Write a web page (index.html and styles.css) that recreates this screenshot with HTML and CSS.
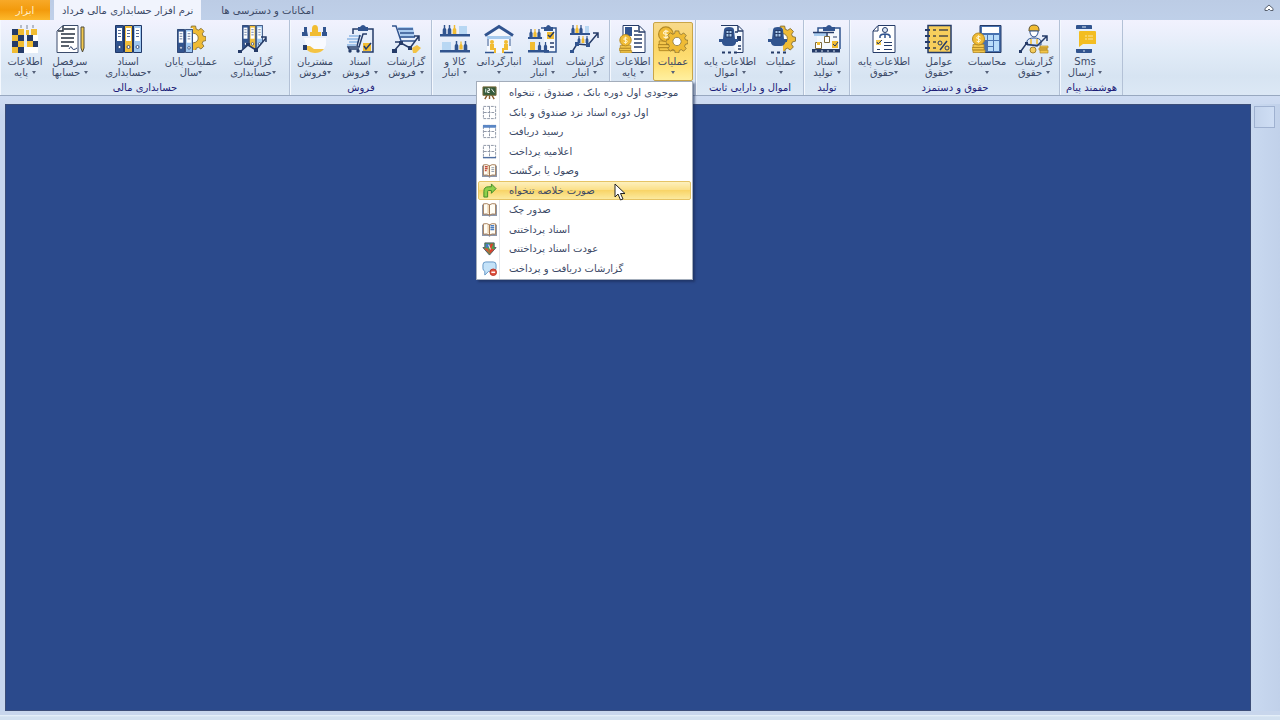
FILE: index.html
```html
<!DOCTYPE html>
<html lang="fa">
<head>
    <meta charset="UTF-8">
    <meta name="viewport" content="width=device-width, initial-scale=1.0">
    <title>نرم افزار حسابداری مالی فرداد</title>
    <link rel="stylesheet" href="styles.css">
</head>
<body>
    <!-- shared icon parts -->
    <svg class="defs" width="0" height="0" aria-hidden="true">
        <symbol id="gear" viewBox="0 0 24 24">
            <path d="M10 1h4l.6 3 2.200.9 2.500-1.700 2.800 2.800-1.700 2.500.9 2.200 2.700.6v3.600l-2.800.7-.9 2.200 1.700 2.500-2.800 2.800-2.500-1.700-2.100.9-.6 2.700h-4l-.6-2.800-2.200-.9-2.400 1.700L2 20.300l1.700-2.500-.9-2.200L0 15v-4l2.800-.6.9-2.200L2 5.800 4.800 3l2.500 1.700 2.100-.9z" fill="#efbb35" stroke="#7d6a34" stroke-width=".8"/>
            <circle cx="12" cy="12.500" r="4.500" fill="#fff" stroke="#7d6a34" stroke-width=".8"/>
        </symbol>
        <symbol id="coins" viewBox="0 0 14 20">
            <path d="M1 12h11v3H1zM0 15h12v2.500H0zM1 17.500h12V20H1z" fill="#f3c64b" stroke="#b48a25" stroke-width=".8"/>
            <circle cx="6.500" cy="6.500" r="6" fill="#f0bb35" stroke="#b48a25"/>
            <path d="M8.500 4.500Q6.500 3 5 4.500t1.500 2T8 8.700 4.500 8.500M6.500 2.800v7.400" fill="none" stroke="#fff3cc"/>
        </symbol>
        <symbol id="binder" viewBox="0 0 9 28" preserveAspectRatio="none">
            <path d="M.5.5h8v27h-8z" stroke="#1f3768"/>
            <path d="M2 3h5v13H2z" fill="#fff"/>
            <path d="M3 5.500h3M3 8.500h3M3 11.500h3" stroke="#5b6f96"/>
            <circle cx="4.500" cy="22" r="1.500" fill="#fff" stroke="#1f3768" stroke-width=".8"/>
        </symbol>
        <symbol id="bottle" viewBox="0 0 5 10">
            <path d="M1.700 0h1.600v3L4.500 5v5h-4V5l1.200-2z"/>
        </symbol>
        <symbol id="lamp" viewBox="0 0 22 30">
            <path d="M6 15 7 6q0-3 5-3t5 3l1 9h3v3h-2v1q-1 3-4 3H9q-3 0-4-3v-1H2v-3z" fill="#31548f"/>
            <path d="M9 6.500h6V13H9zM12 6.500V13M9 9.500h6" fill="#a9caec" stroke="#253b68"/>
            <path d="M5 28.500h3M11 28.500h3M17 28.500h3" stroke="#253b68" stroke-width="2"/>
        </symbol>
        <symbol id="grid" viewBox="0 0 16 16">
            <path d="M1.500 1.500h13v13h-13zM8 2v12M2 8h12" fill="#fff" stroke="#8b93a3" stroke-dasharray="3 1"/>
        </symbol>
        <symbol id="book" viewBox="0 0 16 16">
            <path d="M0 3h16v12H9l-1 1-1-1H0z" fill="#8b97ad"/>
            <path d="M1.500 2q4-1 6.500 1v11q-2.500-2-6.500-1zM14.500 2Q10.500 1 8 3v11q2.500-2 6.500-1z" fill="#fffdf5" stroke="#a27a55"/>
            <path d="M6.500 3v9" stroke="#e3bb84"/>
        </symbol>
    </svg>

    <nav class="tabs">
        <button class="tab tab-file">ابزار</button>
        <button class="tab tab-active">نرم افزار حسابداری مالی فرداد</button>
        <button class="tab">امکانات و دسترسی ها</button>
        <button class="collapse" aria-label="بستن">
            <svg viewBox="0 0 10 8" width="10" height="8"><path d="M1 4.500 5 1l4 3.500v2H6.500L5 5 3.500 6.500H1z" fill="#fff" stroke="#59616f"/></svg>
        </button>
    </nav>

    <header class="ribbon">
        <section class="group">
            <div class="tools">
                <button class="tool w-44">
                    <svg class="icon" viewBox="0 0 30 30">
                        <path d="M11 1v3M17 1v4M23 1v3" stroke="#7b8494"/>
                        <path d="M2 5h6v6H2zM8 17h6v-6H8zM2 17h6v6H2zM8 23h6v6H8zM17 11h6v6h-6zM23 17h5v6h-5z" fill="#253b68"/>
                        <path d="M8 5h6v6H8zM21 5h6v6h-6zM2 11h6v6H2zM16 6h3v5h-3zM8 17h6v6H8zM17 17h6v6h-6zM2 23h6v6H2z" fill="#f1bc32"/>
                        <path d="M14 23h14v6H14zM23 11h5v6h-5z" fill="#fff"/>
                    </svg>
                    <span>اطلاعات</span><span class="drop">پایه</span>
                </button>
                <button class="tool w-46">
                    <svg class="icon" viewBox="0 0 30 30">
                        <path d="M8 1.500h15v27H2V7z" fill="#fff" stroke="#3b4b6b"/>
                        <path d="M8 2v5H3M9 5h11M6 10h14M6 14h13M6 18h13M6 22h8" fill="none" stroke="#26303f" stroke-width="1.500"/>
                        <path d="M26 3h3v21l-1.500 4-1.500-4z" fill="#f3c94f" stroke="#4d4a3c"/>
                        <path d="M14 25q2-4 3-1t5 0" fill="none" stroke="#253b68"/>
                    </svg>
                    <span>سرفصل</span><span class="drop">حسابها</span>
                </button>
                <button class="tool w-70">
                    <svg class="icon" viewBox="0 0 30 30">
                        <use href="#binder" x="2" y="1" width="9" height="28" fill="#31548f"/>
                        <use href="#binder" x="11" y="1" width="9" height="28" fill="#f0bd3a"/>
                        <use href="#binder" x="20" y="1" width="9" height="28" fill="#9fc7f0"/>
                    </svg>
                    <span>اسناد</span><span class="drop tight">حسابداری</span>
                </button>
                <button class="tool w-56">
                    <svg class="icon" viewBox="0 0 30 30">
                        <use href="#gear" x="5" y="1" width="25" height="25"/>
                        <path d="M0 4h17v25H0z" fill="#e8effa"/>
                        <use href="#binder" x="1" y="5" width="8" height="24" fill="#31548f"/>
                        <use href="#binder" x="9" y="5" width="8" height="24" fill="#9fc7f0"/>
                    </svg>
                    <span>عملیات پایان</span><span class="drop tight">سال</span>
                </button>
                <button class="tool w-68">
                    <svg class="icon" viewBox="0 0 30 30">
                        <use href="#binder" x="4" y="1" width="7" height="24" fill="#31548f"/>
                        <use href="#binder" x="11" y="1" width="7" height="24" fill="#f0bd3a"/>
                        <use href="#binder" x="18" y="1" width="7" height="24" fill="#9fc7f0"/>
                        <path d="m2 28 8-7 8 5 10-12v15H2z" fill="#e4edf9"/>
                        <path d="m2 28 8-7 8 5 10-12M23 13h5v5" fill="none" stroke="#253b68" stroke-width="1.500"/>
                        <path d="M0 26h4v3H0zM8 19h4v3H8zM16 24h4v4h-4z" fill="#253b68"/>
                    </svg>
                    <span>گزارشات</span><span class="drop tight">حسابداری</span>
                </button>
            </div>
            <h2 class="caption">حسابداری مالی</h2>
        </section>

        <section class="group">
            <div class="tools">
                <button class="tool w-44">
                    <svg class="icon" viewBox="0 0 30 30">
                        <path d="M4 14h22v7q-3 8-11 8-7 0-8-5z" fill="#f8faff"/>
                        <path d="M4 3h3v4l1 5H2V8h2zM23 3h3v5h1v4h-5V8h1z" fill="#31548f"/>
                        <path d="M12 5q0-4 3-4t3 4v3h3v4H10V8h2z" fill="#f1bc32"/>
                        <path d="M5 22h5l4 3h10q-3 4-9 4-5 0-8-3H5z" fill="#f3c345"/>
                        <path d="M3 21h4v5H3z" fill="#253b68"/>
                    </svg>
                    <span>مشتریان</span><span class="drop tight">فروش</span>
                </button>
                <button class="tool w-46">
                    <svg class="icon" viewBox="0 0 30 30">
                        <path d="M8 10V5h20v23H17" fill="#e6eefa" stroke="#253b68" stroke-width="1.500"/>
                        <path d="M13 3h2q3-4 6 0h2v4H13z" fill="#31548f"/>
                        <path d="M4 12h12M2 15h12M4 18h9M2 21h9" stroke="#8db7e5" stroke-width="1.500"/>
                        <path d="M22 10h-4l-4 13H3l1 2h10M15 11l-3 11" fill="none" stroke="#253b68" stroke-width="1.500"/>
                        <circle cx="5" cy="27" r="1.700" fill="#253b68"/><circle cx="13" cy="27" r="1.700" fill="#253b68"/>
                        <path d="M18 19h8v8h-8z" fill="#f1bc32"/>
                        <path d="m19 22 2 3 5-6" fill="none" stroke="#253b68" stroke-width="1.500"/>
                    </svg>
                    <span>اسناد</span><span class="drop">فروش</span>
                </button>
                <button class="tool w-46">
                    <svg class="icon" viewBox="0 0 30 30">
                        <path d="M7 3h15l2 11H10z" fill="#a9cbf0"/>
                        <path d="M1 2h4l5 15h14M7 5h15M9 9h14M9 13h15" fill="none" stroke="#31548f" stroke-width="1.500"/>
                        <path d="m3 27 7-8 9 5L28 12M23 12h5v5M4 18h6" fill="none" stroke="#253b68" stroke-width="1.500"/>
                        <path d="M1 25h5v4H1zM8 17h4v4H8zM17 22h4v4h-4z" fill="#253b68"/>
                        <path d="m21 24 5-3 4 3-5 5h-3z" fill="#f3c345"/>
                    </svg>
                    <span>گزارشات</span><span class="drop">فروش</span>
                </button>
            </div>
            <h2 class="caption">فروش</h2>
        </section>

        <section class="group">
            <div class="tools">
                <button class="tool w-40">
                    <svg class="icon" viewBox="0 0 30 30">
                        <g fill="#31548f">
                            <use href="#bottle" x="2" y="1" width="5" height="9"/><use href="#bottle" x="7" y="1" width="5" height="9"/>
                            <use href="#bottle" x="14" y="17" width="5" height="9"/><use href="#bottle" x="23" y="17" width="5" height="9"/>
                        </g>
                        <g fill="#f1bc32"><use href="#bottle" x="12" y="1" width="5" height="9"/><use href="#bottle" x="19" y="17" width="4" height="9"/></g>
                        <path d="M19 2h8v8h-8zM2 18h9v8H2z" fill="#b8d7f3"/>
                        <path d="M0 10h30v2.500H0zM0 26h30v2.500H0z" fill="#31548f"/>
                    </svg>
                    <span>کالا و</span><span class="drop">انبار</span>
                </button>
                <button class="tool w-48">
                    <svg class="icon" viewBox="0 0 30 30">
                        <path d="M3 12 15 4l12 8v17H3z" fill="#f5f8fd"/>
                        <path d="M1 11.500 15 2.500l14 9" fill="none" stroke="#31548f" stroke-width="3"/>
                        <path d="M3 12h24v3H3z" fill="#a7cbee"/>
                        <path d="M4 15v7M26 15v7" stroke="#31548f"/>
                        <circle cx="8" cy="18" r="2" fill="#f1bc32"/><circle cx="22" cy="18" r="2" fill="#f1bc32"/>
                        <path d="M6 20h4v4h2v5h-2v-3H6zM24 20h-4v4h-2v5h2v-3h4z" fill="#f1bc32"/>
                        <path d="M1 28.500h9M20 28.500h9" stroke="#31548f" stroke-width="1.500"/>
                    </svg>
                    <span>انبارگردانی</span><span class="drop alone"></span>
                </button>
                <button class="tool w-40">
                    <svg class="icon" viewBox="0 0 30 30">
                        <path d="M13 4h15v24H15" fill="#f3f7fd" stroke="#31548f" stroke-width="1.500"/>
                        <path d="M16 3h2q2-4 5 0h2v4h-9z" fill="#31548f"/>
                        <path d="M0 13h16v16H0z" fill="#e3ecf9"/>
                        <g fill="#31548f"><use href="#bottle" x="1" y="5" width="4" height="8"/><use href="#bottle" x="9" y="5" width="4" height="8"/><use href="#bottle" x="9" y="18" width="5" height="8"/><use href="#bottle" x="15" y="18" width="5" height="8"/></g>
                        <use href="#bottle" x="5" y="5" width="4" height="8" fill="#f1bc32"/>
                        <path d="M2 18h5v8H2z" fill="#f1bc32"/>
                        <path d="M0 13h14v2H0zM0 26h21v2.500H0z" fill="#31548f"/>
                        <path d="M19 8h7v7h-7z" fill="#f1bc32"/>
                        <path d="m20 11 2 2 4-5M22 19h4M22 23h4" fill="none" stroke="#253b68" stroke-width="1.500"/>
                    </svg>
                    <span>اسناد</span><span class="drop">انبار</span>
                </button>
                <button class="tool w-44">
                    <svg class="icon" viewBox="0 0 30 30">
                        <g fill="#31548f"><use href="#bottle" x="1" y="1" width="4" height="8"/><use href="#bottle" x="9" y="1" width="4" height="8"/><use href="#bottle" x="7" y="12" width="4" height="7"/><use href="#bottle" x="15" y="12" width="4" height="7"/></g>
                        <g fill="#f1bc32"><use href="#bottle" x="5" y="1" width="4" height="8"/><use href="#bottle" x="11" y="12" width="4" height="7"/></g>
                        <path d="M15 2h4v7h-4z" fill="#b8d7f3"/>
                        <path d="M0 9h20v2H0z" fill="#31548f"/>
                        <path d="m2 28 5-8 11 1L28 9M23 9h5v5" fill="none" stroke="#253b68" stroke-width="1.500"/>
                        <path d="M5 18h4v4H5zM16 19h4v4h-4zM0 26h4v3H0z" fill="#31548f"/>
                    </svg>
                    <span>گزارشات</span><span class="drop">انبار</span>
                </button>
            </div>
            <div class="caption"></div>
        </section>

        <section class="group">
            <div class="tools">
                <button class="tool w-40">
                    <svg class="icon" viewBox="0 0 30 30">
                        <path d="M5 1.500h16l6 6v21H5z" fill="#fff" stroke="#253b68"/>
                        <path d="M7 3h7v9H7z" fill="#31548f"/>
                        <path d="M21 2v6h6M16 7h4M16 11h8M16 15h8M16 19h8M16 23h8" fill="none" stroke="#253b68" stroke-width="1.500"/>
                        <use href="#coins" x="1" y="10" width="14" height="19"/>
                    </svg>
                    <span>اطلاعات</span><span class="drop">پایه</span>
                </button>
                <div class="menu-anchor">
                    <button class="tool w-40 open" aria-expanded="true">
                        <svg class="icon" viewBox="0 0 30 30">
                            <use href="#coins" x="0" y="1" width="17" height="27"/>
                            <use href="#gear" x="8" y="5" width="22" height="24"/>
                        </svg>
                        <span>عملیات</span><span class="drop alone"></span>
                    </button>
                    <ul class="menu">
                        <li><button class="item">
                            <svg class="item-icon" viewBox="0 0 16 16"><path d="M3 15 6 10M13 15l-3-5M8 11v4" stroke="#8b5a2a" stroke-width="1.500"/><path d="M1 2h14v9H1z" fill="#355b3c" stroke="#7b6b3a"/><path d="M4 4v4M6 4h2v2H6v2h2M10 4l3 4" fill="none" stroke="#fff"/></svg>
                            <span>موجودی اول دوره بانک ، صندوق ، تنخواه</span>
                        </button></li>
                        <li><button class="item">
                            <svg class="item-icon" viewBox="0 0 16 16"><use href="#grid" width="16" height="16"/></svg>
                            <span>اول دوره اسناد نزد صندوق و بانک</span>
                        </button></li>
                        <li><button class="item">
                            <svg class="item-icon" viewBox="0 0 16 16"><use href="#grid" width="16" height="16"/><path d="M1 1h14v3H1z" fill="#5a86c4"/></svg>
                            <span>رسید دریافت</span>
                        </button></li>
                        <li><button class="item">
                            <svg class="item-icon" viewBox="0 0 16 16"><use href="#grid" width="16" height="16"/><path d="M1 14.500h14" stroke="#4f6fa3" stroke-width="1.500"/></svg>
                            <span>اعلامیه پرداخت</span>
                        </button></li>
                        <li><button class="item">
                            <svg class="item-icon" viewBox="0 0 16 16"><use href="#book" width="16" height="16"/><path d="M3 4h3M3 6h3M3 8h2" stroke="#c24a3a" stroke-width="1.500"/><path d="M10 5h3M10 7h3M10 9h3" stroke="#8d98ab"/></svg>
                            <span>وصول یا برگشت</span>
                        </button></li>
                        <li><button class="item item-hover">
                            <svg class="item-icon" viewBox="0 0 16 16"><path d="M2 15V9q0-5 5-5h3V1l5 5-5 5V8H7Q6 8 6 9v6z" fill="#8fd04a" stroke="#3d8a28"/></svg>
                            <span>صورت خلاصه تنخواه</span>
                        </button></li>
                        <li><button class="item">
                            <svg class="item-icon" viewBox="0 0 16 16"><use href="#book" width="16" height="16"/></svg>
                            <span>صدور چک</span>
                        </button></li>
                        <li><button class="item">
                            <svg class="item-icon" viewBox="0 0 16 16"><use href="#book" width="16" height="16"/><path d="M9 4h4M9 6h4M9 8h4" stroke="#4b7cc0" stroke-width="1.500"/></svg>
                            <span>اسناد پرداختنی</span>
                        </button></li>
                        <li><button class="item">
                            <svg class="item-icon" viewBox="0 0 16 16"><path d="M3 2h10v5h2l-7 8-7-8h2z" fill="#4fa64a" stroke="#4d5968"/><path d="M4 3h4v4H4z" fill="#4677c8"/><path d="M9 3h3l-2 5 3 1-5 5V8z" fill="#d9432f"/><path d="M2 8h4l2 5z" fill="#e04b37"/><path d="m7 4 2 5" stroke="#fff"/></svg>
                            <span>عودت اسناد پرداختنی</span>
                        </button></li>
                        <li><button class="item">
                            <svg class="item-icon" viewBox="0 0 16 16"><path d="M4 1h8q3 0 3 3v4q0 3-3 3H7l-4 4v-4Q1 10 1 8V4q0-3 3-3z" fill="#c4e2f8" stroke="#5f93c4"/><circle cx="12" cy="12" r="3.500" fill="#e0503f" stroke="#b93426"/><path d="M10 12h4" stroke="#fff" stroke-width="1.500"/></svg>
                            <span>گزارشات دریافت و پرداخت</span>
                        </button></li>
                    </ul>
                </div>
            </div>
            <div class="caption"></div>
        </section>

        <section class="group">
            <div class="tools">
                <button class="tool w-62">
                    <svg class="icon" viewBox="0 0 30 30">
                        <path d="M6 1.500h17l5 5v22h-6" fill="#f4f8fd" stroke="#253b68"/>
                        <path d="M23 2v5h5M20 8h3M23 22h3M23 25h3" fill="none" stroke="#253b68" stroke-width="1.500"/>
                        <path d="M22 12h4v5h-4z" fill="#253b68"/>
                        <use href="#lamp" x="2" y="0" width="22" height="30"/>
                    </svg>
                    <span>اطلاعات پایه</span><span class="drop">اموال</span>
                </button>
                <button class="tool w-40">
                    <svg class="icon" viewBox="0 0 30 30">
                        <use href="#gear" x="3" y="1" width="27" height="26"/>
                        <path d="M2 4h15v25H2z" fill="#e5edf9"/>
                        <use href="#lamp" x="0" y="0" width="22" height="30"/>
                    </svg>
                    <span>عملیات</span><span class="drop alone"></span>
                </button>
            </div>
            <h2 class="caption">اموال و دارایی ثابت</h2>
        </section>

        <section class="group">
            <div class="tools">
                <button class="tool w-40">
                    <svg class="icon" viewBox="0 0 30 30">
                        <path d="M5 4h23v24H5z" fill="#f4f8fd"/>
                        <path d="M6 9V4h22v21" fill="none" stroke="#31548f" stroke-width="1.500"/>
                        <path d="M11 3h3q3-4 6 0h3v4H11z" fill="#31548f"/>
                        <path d="M2 8h12v4H2z" fill="#a7cbee"/>
                        <path d="M1 8.500h21M15 9v4" fill="none" stroke="#253b68" stroke-width="1.500"/>
                        <path d="M12.500 12.500h5v6h-5zM3.500 18.500h6v6h-6z" fill="#fff" stroke="#7b693b"/>
                        <path d="M20 17h6v7h-6zM5 18h3v3H5z" fill="#f1bc32"/>
                        <path d="m21 20 2 2 3-4M21 13h4" fill="none" stroke="#253b68"/>
                        <path d="M0 25h28v3.500H0z" fill="#253b68"/>
                        <path d="M3 27h2M9 27h2M15 27h2M21 27h2" stroke="#dbe7f6"/>
                    </svg>
                    <span>اسناد</span><span class="drop">تولید</span>
                </button>
            </div>
            <h2 class="caption">تولید</h2>
        </section>

        <section class="group">
            <div class="tools">
                <button class="tool w-62">
                    <svg class="icon" viewBox="0 0 30 30">
                        <path d="M9 1.500h17v27H4V7z" fill="#fff" stroke="#253b68"/>
                        <path d="M9 2v5H4" fill="none" stroke="#253b68"/>
                        <circle cx="16" cy="6" r="2.500" fill="#dce8f7" stroke="#253b68"/>
                        <path d="M11 14v-2q1-2 5-2t5 2v2M16 10v4" fill="none" stroke="#31548f" stroke-width="1.500"/>
                        <path d="M7 16h5v5H7z" fill="#f6cb54"/>
                        <path d="m8 18 1 2 4-4M15 18.500h8M15 21.500h8M8 25.500h3M15 25.500h8" fill="none" stroke="#253b68"/>
                    </svg>
                    <span>اطلاعات پایه</span><span class="drop tight">حقوق</span>
                </button>
                <button class="tool w-48">
                    <svg class="icon" viewBox="0 0 30 30">
                        <path d="M4 1.500h23v27H4z" fill="#f6ce5c" stroke="#253b68" stroke-width="1.500"/>
                        <path d="M1 6h5M1 12h5M1 18h5M1 24h5" stroke="#253b68" stroke-width="2"/>
                        <path d="M9 6h3M15 6h9M9 12h3M15 12h9M9 18h3M9 24h3" stroke="#4d4b45" stroke-width="1.500"/>
                        <path d="m16 26 7-9" stroke="#253b68" stroke-width="1.500"/>
                        <circle cx="16" cy="19" r="2" fill="none" stroke="#253b68"/><circle cx="23" cy="24" r="2" fill="none" stroke="#253b68"/>
                    </svg>
                    <span>عوامل</span><span class="drop tight">حقوق</span>
                </button>
                <button class="tool w-48">
                    <svg class="icon" viewBox="0 0 30 30">
                        <path d="M8 1.500h21v27H8z" fill="#4872b0" stroke="#253b68"/>
                        <path d="M10 3h17v6H10z" fill="#fff"/>
                        <path d="M11 11h4v5h-4zM16 11h5v5h-5zM22 11h5v5h-5zM16 17h5v5h-5zM22 17h5v10h-5zM16 23h5v4h-5z" fill="#b8dcfa"/>
                        <use href="#coins" x="0" y="8" width="14" height="21"/>
                    </svg>
                    <span>محاسبات</span><span class="drop alone"></span>
                </button>
                <button class="tool w-46">
                    <svg class="icon" viewBox="0 0 30 30">
                        <path d="M10 6q0-5 5-5t5 5v1H10z" fill="#f1bc32" stroke="#5e5334"/>
                        <path d="M11 7h8v2q-1 4-4 4t-4-4z" fill="#fff" stroke="#31548f"/>
                        <path d="M8 21v-4q1-3 7-3t7 3v4z" fill="#dfeaf8" stroke="#31548f"/>
                        <path d="M12 15v5M18 15v5" stroke="#f1bc32" stroke-width="1.500"/>
                        <circle cx="14" cy="26" r="3" fill="#f3cc5d" stroke="#a2802c"/>
                        <path d="M21 22h8v2h-8zM20 24h8v2h-8zM21 26h8v3h-8z" fill="#f3c64b" stroke="#b48a25" stroke-width=".7"/>
                        <path d="m2 27 5-7 11 2L28 12M23 12h5v5" fill="none" stroke="#253b68" stroke-width="1.500"/>
                        <path d="M0 26h3v3H0zM6 18h3v3H6z" fill="#253b68"/>
                    </svg>
                    <span>گزارشات</span><span class="drop">حقوق</span>
                </button>
            </div>
            <h2 class="caption">حقوق و دستمزد</h2>
        </section>

        <section class="group">
            <div class="tools">
                <button class="tool w-44">
                    <svg class="icon" viewBox="0 0 30 30">
                        <path d="M6 3h16v24H6z" fill="#e6effb"/>
                        <path d="M6 5V2q0-1 1-1h14q1 0 1 1v3zM6 25h16v3q0 1-1 1H7q-1 0-1-1z" fill="#31548f"/>
                        <path d="M12 3h4M13 27h2" stroke="#dbe7f6"/>
                        <path d="M10 7h15q1 0 1 1v12H13l-4 3V8q0-1 1-1z" fill="#f3bd22"/>
                        <path d="M15 12h2M18 12h5M15 15h2M18 15h5" stroke="#fbe6a4"/>
                    </svg>
                    <span>Sms</span><span class="drop">ارسال</span>
                </button>
            </div>
            <h2 class="caption">هوشمند پیام</h2>
        </section>
    </header>

    <main class="workspace">
        <div class="canvas"></div>
        <aside class="side"><button class="side-button" aria-label="پنل"></button></aside>
    </main>
    <footer class="status"></footer>

    <svg class="cursor" viewBox="0 0 12 18" width="12" height="18" aria-hidden="true"><path d="M1 1v13l3-3 2.500 6 2.500-1-2.500-5.500H11z" fill="#fff" stroke="#222"/></svg>
</body>
</html>
```
FILE: styles.css
```css
* { box-sizing: border-box; }
body {
    margin: 0;
    height: 100vh;
    display: flex;
    flex-direction: column;
    font-family: "DejaVu Sans", sans-serif;
    font-size: 10px;
    line-height: 11px;
    color: #3b4966;
    background: #c9d8f0;
    overflow: hidden;
}
button { font: inherit; color: inherit; background: none; border: none; padding: 0; margin: 0; }
.defs { position: absolute; }

.tabs { display: flex; height: 20px; background: linear-gradient(#bccce5, #bfd0e9); }
.tab { padding: 0 8px; white-space: nowrap; }
.tab-file { width: 50px; color: #fff0c8; background: linear-gradient(#f8a928, #f39a0c 50%, #fdb92c); margin-right: 4px; }
.tab-active { background: #f1f4fd; margin-right: 12px; }
.collapse { margin-left: auto; width: 22px; height: 16px; display: grid; place-items: center; }

.ribbon {
    display: flex;
    height: 76px;
    background: linear-gradient(#f2f2fe, #e2ecf8 40%, #d7e4f2 75%, #dce8f5);
    border-bottom: 1px solid #98a8c0;
}
.group {
    display: flex;
    flex-direction: column;
    padding: 2px 2px 0;
    border-right: 1px solid #b3c1d6;
    border-left: 1px solid #f4f8fe;
}
.tools { display: flex; }
.tool {
    display: flex;
    flex-direction: column;
    align-items: center;
    height: 59px;
    padding-top: 2px;
    white-space: nowrap;
    border: 1px solid transparent;
    border-top: none;
    border-radius: 2px;
}
.tool.open {
    background: linear-gradient(#f7d98b, #fbd566 40%, #ffe27a 75%, #fff0a0);
    border: 1px solid #c9a548;
    padding-top: 1px;
}
.icon { width: 30px; height: 30px; margin-bottom: 2px; flex: none; }
.drop { display: flex; align-items: center; gap: 4px; }
.drop::after {
    content: "";
    border: 2px solid transparent;
    border-top: 3px solid #55617a;
    border-bottom: none;
}
.drop.tight { gap: 0; }
.drop.alone { height: 11px; }

.w-40 { width: 40px; }
.w-44 { width: 44px; }
.w-46 { width: 46px; }
.w-48 { width: 48px; }
.w-56 { width: 56px; }
.w-62 { width: 62px; }
.w-68 { width: 68px; }
.w-70 { width: 70px; }

.caption {
    margin: 0;
    padding: 1px 3px 0;
    font-size: 10px;
    font-weight: normal;
    text-align: center;
    color: #1c1c78;
    white-space: nowrap;
}

.menu-anchor { position: relative; }
.menu {
    position: absolute;
    top: 100%;
    right: 0;
    z-index: 2;
    width: 217px;
    height: 199px;
    margin: 0;
    padding: 1px;
    display: flex;
    flex-direction: column;
    list-style: none;
    background: linear-gradient(90deg, #fff 22px, #e3e6ec 22px, #e3e6ec 23px, #fff 23px);
    border: 1px solid #a3adbb;
    box-shadow: 2px 2px 2px #1b2c5599;
}
.menu li { flex: 1; display: flex; }
.item { flex: 1; display: flex; align-items: center; gap: 12px; padding-left: 3px; white-space: nowrap; border: 1px solid transparent; }
.item-hover {
    background: linear-gradient(#fdf0bd, #fbe08a 45%, #f8d468 50%, #fcea9f);
    border-color: #e5c365;
    border-radius: 2px;
}
.item-icon { width: 15px; height: 15px; flex: none; }

.workspace { flex: 1; display: flex; padding: 8px 0 0 5px; background: linear-gradient(#cfdcf2, #c6d6ee 20px); }
.canvas { flex: 1; background: #2b4a8c; border: 1px solid #3b4d78; }
.side { width: 29px; padding: 2px 3px; background: linear-gradient(90deg, #c9d9f0, #c1d1ea); }
.side-button { display: block; width: 21px; height: 22px; background: linear-gradient(90deg, #c4d4ec, #cfdef4); border: 1px solid #9fb1d0; }
.status { height: 9px; background: linear-gradient(#c8d6ec 4px, #eaf3fb 4px, #d3e1f0 6px); }

.cursor { position: absolute; left: 614px; top: 183px; z-index: 3; }
```
